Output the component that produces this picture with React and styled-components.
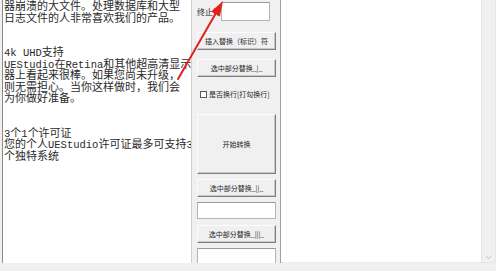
import styled, { createGlobalStyle } from 'styled-components';

const GlobalStyle = createGlobalStyle`
  html, body {
    margin: 0;
    padding: 0;
    background: #f0f0f0;
    overflow: hidden;
  }
`;

const Page = styled.div`
  position: relative;
  width: 496px;
  height: 271px;
  display: flex;
  flex-direction: column;
  background: #f0f0f0;
  font-family: 'Noto Sans CJK SC', 'Liberation Sans', sans-serif;
  overflow: hidden;
`;

const Main = styled.div`
  display: flex;
  height: 263px;
`;

const Source = styled.div`
  margin-left: 2px;
  width: 190px;
  height: 263px;
  box-sizing: border-box;
  background: #fff;
  border-left: 1px solid #8a8a8a;
  border-right: 1px solid #d0d0d0;
  padding-left: 1px;
  overflow: hidden;
  font-family: 'Noto Sans CJK SC', sans-serif;
  font-size: 11px;
  color: #2a2a2a;
`;

const Line = styled.div`
  height: 11.5px;
  line-height: 11.5px;
  white-space: pre;
`;

const Latin = styled.span`
  font-family: 'Liberation Mono', monospace;
  font-size: 10.5px;
`;

const Panel = styled.div`
  width: 89px;
  flex-shrink: 0;
  box-sizing: border-box;
  border-right: 1px solid #a0a0a0;
  padding-left: 5px;
  display: flex;
  flex-direction: column;
  overflow: hidden;
`;

const FieldRow = styled.div`
  display: flex;
  align-items: center;
  margin-top: 2px;
  height: 19px;
`;

const Label = styled.span`
  width: 24px;
  font-size: 8px;
  color: #222;
`;

const Input = styled.div`
  box-sizing: border-box;
  width: ${(p) => p.$w || 79}px;
  height: ${(p) => p.$h}px;
  margin-top: ${(p) => p.$mt || 0}px;
  flex-shrink: 0;
  background: #fff;
  border: 1px solid #b4b4b4;
  border-top-color: #9a9a9a;
`;

const Button = styled.div`
  box-sizing: border-box;
  width: 79px;
  height: ${(p) => p.$h || 18}px;
  margin-top: ${(p) => p.$mt}px;
  flex-shrink: 0;
  display: flex;
  align-items: center;
  justify-content: center;
  background: #f0f0f0;
  border: 1px solid;
  border-color: #fcfcfc #7d7d7d #7d7d7d #fcfcfc;
  box-shadow: inset -1px -1px 0 #c8c8c8;
  font-size: 7px;
  color: #1e1e1e;
  white-space: nowrap;
`;

const CheckRow = styled.label`
  display: flex;
  align-items: center;
  gap: 2px;
  margin-top: 12px;
  margin-left: 3px;
  height: 10px;
  font-size: 7px;
  color: #1e1e1e;
  white-space: nowrap;
`;

const Box = styled.span`
  box-sizing: border-box;
  width: 7px;
  height: 7px;
  background: #fff;
  border: 1px solid #5a5a5a;
`;

const Output = styled.div`
  flex: 1;
  background: #fff;
  border-bottom: 1px dotted #dcdcdc;
`;

const Gutter = styled.div`
  width: 15px;
  flex-shrink: 0;
  box-sizing: border-box;
  border-left: 1px dotted #dadada;
  border-right: 1px dotted #dedede;
  border-bottom: 1px dotted #dcdcdc;
  display: flex;
  align-items: flex-end;
  justify-content: center;
  padding-bottom: 3px;
`;

const Strip = styled.div`
  height: 8px;
  background: #f0f0f0;
`;

const Overlay = styled.svg`
  position: absolute;
  left: 0;
  top: 0;
  pointer-events: none;
`;

const lines = [
  '器崩溃的大文件。处理数据库和大型',
  '日志文件的人非常喜欢我们的产品。',
  '',
  '',
  '4k UHD支持',
  'UEStudio在Retina和其他超高清显示',
  '器上看起来很棒。如果您尚未升级，',
  '则无需担心。当你这样做时，我们会',
  '为你做好准备。',
  '',
  '',
  '3个1个许可证',
  '您的个人UEStudio许可证最多可支持3',
  '个独特系统',
];

// ascii runs get the narrower mono face
const renderLine = (s) =>
  s.split(/([\x20-\x7e]+)/).map((part, i) =>
    /^[\x20-\x7e]+$/.test(part) ? <Latin key={i}>{part}</Latin> : part
  );

const App = () => {
  return (
    <>
      <GlobalStyle />
      <Page>
        <Main>
          <Source>
            {lines.map((l, i) => (
              <Line key={i}>{renderLine(l)}</Line>
            ))}
          </Source>
          <Panel>
            <FieldRow>
              <Label>终止符</Label>
              <Input $w={49} $h={19} />
            </FieldRow>
            <Button $mt={11}>插入替换（标识）符</Button>
            <Button $mt={9}>选中部分替换_|_</Button>
            <CheckRow>
              <Box />
              是否换行[打勾换行]
            </CheckRow>
            <Button $mt={15} $h={60}>开始转换</Button>
            <Button $mt={5}>选中部分替换_||_</Button>
            <Input $mt={5} $h={17} />
            <Button $mt={6}>选中部分替换_|||_</Button>
            <Input $mt={5} $h={20} />
          </Panel>
          <Output />
          <Gutter>
            <svg width="5" height="3" viewBox="0 0 5 3">
              <path d="M0.5 0.5 L2.5 2.5 L4.5 0.5" fill="none" stroke="#b8b8b8" strokeWidth="1" />
            </svg>
          </Gutter>
        </Main>
        <Strip />
        <Overlay width="496" height="271" viewBox="0 0 496 271">
          <line x1="178" y1="79" x2="216" y2="13" stroke="#e3211c" strokeWidth="2" strokeLinecap="round" />
          <polygon points="223,1 219.8,16.5 211.2,11.5" fill="#e3211c" />
        </Overlay>
      </Page>
    </>
  );
};

export default App;
